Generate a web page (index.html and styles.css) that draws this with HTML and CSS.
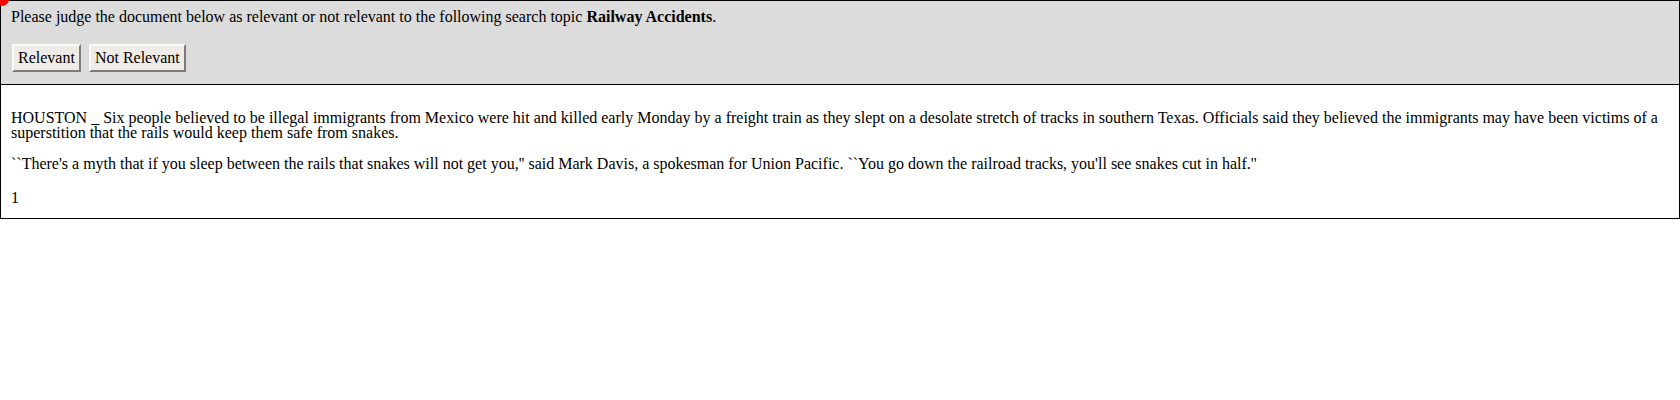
FILE: index.html
```html
<!DOCTYPE html>
<html>
<head>
<meta charset="utf-8">
<link rel="stylesheet" href="styles.css">
</head>
<body>
<div class="dot"></div>
<div class="judge">
  <p class="prompt">Please judge the document below as relevant or not relevant to the following search topic <b>Railway Accidents</b>.</p>
  <div class="actions">
    <button class="btn">Relevant</button>
    <button class="btn">Not Relevant</button>
  </div>
</div>
<div class="doc">
  <p class="para">HOUSTON _ Six people believed to be illegal immigrants from Mexico were hit and killed early Monday by a freight train as they slept on a desolate stretch of tracks in southern Texas. Officials said they believed the immigrants may have been victims of a superstition that the rails would keep them safe from snakes.</p>
  <p class="para">``There's a myth that if you sleep between the rails that snakes will not get you,'' said Mark Davis, a spokesman for Union Pacific. ``You go down the railroad tracks, you'll see snakes cut in half.''</p>
  <p class="page">1</p>
</div>
</body>
</html>
```

FILE: styles.css
```css
html, body {
  margin: 0;
  padding: 0;
  background: #fff;
}
body {
  font-family: "Liberation Serif", "Times New Roman", serif;
  font-size: 16px;
  color: #000;
  position: relative;
}
.dot {
  position: absolute;
  left: -5px;
  top: -8px;
  width: 14px;
  height: 14px;
  border-radius: 50%;
  background: #f00;
  z-index: 1;
}
.judge {
  background: #dcdcdc;
  border: 1px solid #000;
  padding: 7px 10px 12px;
}
.prompt {
  margin: 0;
  line-height: 18px;
}
.actions {
  display: flex;
  gap: 8px;
  margin-top: 18px;
  padding-left: 1px;
}
.btn {
  font-family: "Liberation Serif", "Times New Roman", serif;
  font-size: 16px;
  color: #000;
  background: #efebe7;
  border: 2px solid;
  border-color: #fafafa #7c7c7c #7c7c7c #fafafa;
  height: 28px;
  padding: 0 4px;
  margin: 0;
  line-height: 20px;
}
.doc {
  border: 1px solid #000;
  border-top: none;
  padding: 26px 10px 13px;
}
.para {
  margin: 0 0 17px;
  line-height: 14.5px;
}
.page {
  margin: 0;
  line-height: 14.5px;
  padding-top: 2px;
}
```
